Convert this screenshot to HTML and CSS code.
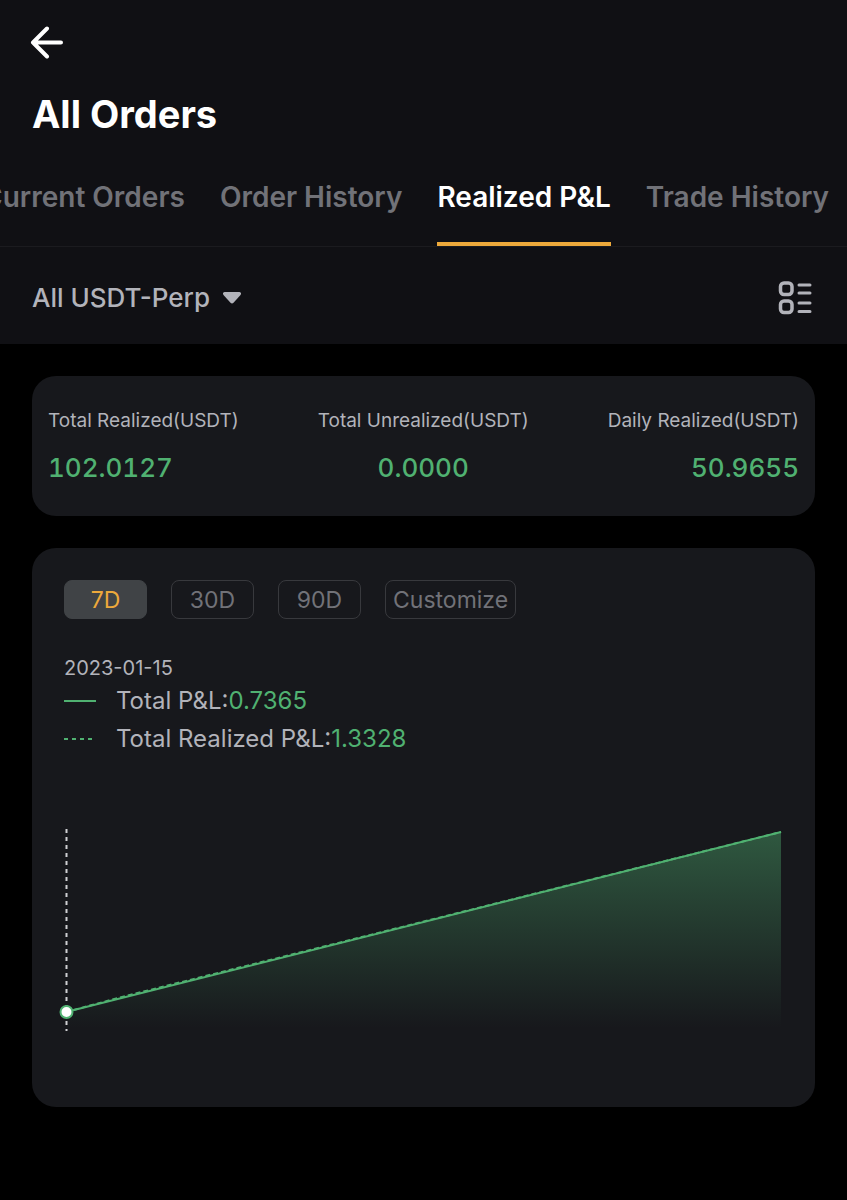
FILE: index.html
```html
<!DOCTYPE html>
<html lang="en">
<head>
<meta charset="utf-8">
<meta name="viewport" content="width=device-width, initial-scale=1">
<title>All Orders</title>
<link rel="stylesheet" href="styles.css">
</head>
<body>
    <header class="head">
        <button type="button" class="back" aria-label="Back">
            <svg width="34" height="34" viewBox="0 0 34 34"><path d="M17 3.500L3 17.500L17 31.500M3 17.500H31" fill="none" stroke="#fff" stroke-width="4" stroke-linecap="round" stroke-linejoin="round"/></svg>
        </button>
        <h1>All Orders</h1>
        <nav class="tabs">
            <a href="#current">Current Orders</a>
            <a href="#history">Order History</a>
            <a href="#realized" class="on" aria-current="page">Realized P&amp;L</a>
            <a href="#trades">Trade History</a>
        </nav>
        <div class="filter">
            <label class="pair">
                <select aria-label="Contract"><option>All USDT-Perp</option></select>
                <svg width="20" height="14" viewBox="0 0 20 14"><path d="M2.500 1H17.500Q20 1.500 18.500 4L11.500 11.800Q10 13.200 8.500 11.800L1.500 4Q0 1.500 2.500 1Z" fill="#b2b3ba"/></svg>
            </label>
            <button type="button" class="list" aria-label="List view">
                <svg width="36" height="36" viewBox="0 0 36 36" fill="none" stroke="#b2b3ba" stroke-width="3.500" stroke-linecap="round">
                    <rect x="2.500" y="3" width="11.500" height="11.500" rx="3.500"/>
                    <rect x="2.500" y="21" width="11.500" height="11.500" rx="3.500"/>
                    <path d="M21 5H32M21 13H32M21 23H32M21 31.500H32" stroke-width="3"/>
                </svg>
            </button>
        </div>
    </header>

    <main>
        <section class="card totals">
            <dl><dt>Total Realized(USDT)</dt><dd>102.0127</dd></dl>
            <dl><dt>Total Unrealized(USDT)</dt><dd>0.0000</dd></dl>
            <dl><dt>Daily Realized(USDT)</dt><dd>50.9655</dd></dl>
        </section>

        <section class="card report">
            <div class="range">
                <button type="button" class="on">7D</button>
                <button type="button">30D</button>
                <button type="button">90D</button>
                <button type="button">Customize</button>
            </div>
            <p class="date">2023-01-15</p>
            <ul class="legend">
                <li><svg width="32" height="2"><path d="M0 1H32" stroke="#50b171" stroke-width="2"/></svg><span>Total P&amp;L:<b>0.7365</b></span></li>
                <li><svg width="32" height="2"><path d="M0 1H29" stroke="#50b171" stroke-width="2" stroke-dasharray="4"/></svg><span>Total Realized P&amp;L:<b>1.3328</b></span></li>
            </ul>
            <svg class="chart" viewBox="0 0 719 204" role="img" aria-label="Total P&amp;L, last 7 days">
                <defs>
                    <linearGradient id="fade" x1="0" y1="0" x2="0" y2="1">
                        <stop offset="0" stop-color="#50b171" stop-opacity=".42"/>
                        <stop offset="1" stop-color="#50b171" stop-opacity="0"/>
                    </linearGradient>
                </defs>
                <path d="M2 184L717 4V200H2Z" fill="url(#fade)"/>
                <path d="M2.500 1V203" stroke="#d0d0d3" stroke-width="2" stroke-dasharray="4"/>
                <path d="M2 184L60 168.400L130 150.900L300 108.500L717 4" fill="none" stroke="#50b171" stroke-width="2" stroke-dasharray="5 3"/>
                <path d="M2 184L717 4" stroke="#50b171" stroke-width="2"/>
                <circle cx="2.500" cy="184" r="6" fill="#fff" stroke="#50b171" stroke-width="2"/>
            </svg>
        </section>
    </main>
</body>
</html>
```
FILE: styles.css
```css
* { box-sizing:border-box; }
body,h1,p,ul,dl,dd { margin:0; padding:0; }
body { background:#000; color:#b2b3ba; font-family:Inter,"Liberation Sans",sans-serif; }
button,select { margin:0; padding:0; border:0; background:none; color:inherit; font:inherit; cursor:pointer; }
a { color:inherit; text-decoration:none; }
svg { display:block; flex:none; }

.head { background:#101014; }
.back { display:block; margin-left:30px; padding-top:25px; }
h1 { padding:27px 32px 0; color:#fff; font-size:38px; line-height:56px; font-weight:700; }

.tabs { display:flex; justify-content:flex-end; gap:35px; margin-top:20px; padding-right:18px; overflow:hidden; border-bottom:1px solid #1b1b1f; }
.tabs a { flex:none; height:84px; color:#717278; font-size:28px; line-height:70px; font-weight:600; white-space:nowrap; }
.tabs .on { color:#fff; border-bottom:4px solid #eda93b; }

.filter { display:flex; justify-content:space-between; align-items:center; height:97px; padding:5px 33px 0 32px; }
.pair { display:flex; align-items:center; gap:11px; font-size:26px; font-weight:500; }
.pair select { appearance:none; line-height:36px; }

main { padding:32px; }
.card { background:#17181c; border-radius:24px; }
.totals { display:flex; justify-content:space-between; height:140px; padding:28px 16px; }
.totals dl { text-align:center; }
.totals dl:first-child { text-align:left; }
.totals dl:last-child { text-align:right; }
.totals dt { font-size:19px; line-height:34px; }
.totals dd { margin-top:12px; color:#50b171; font-size:26px; line-height:36px; font-weight:500; font-variant-numeric:tabular-nums; }

.report { margin-top:32px; padding:32px 32px 75px; }
.range { display:flex; gap:24px; }
.range button { min-width:83px; height:39px; padding:0 7px; border:1px solid #38393d; border-radius:8px; color:#717278; font-size:23px; }
.range .on { border-color:#404346; background:#404346; color:#eda93b; }
.date { margin-top:35px; font-size:20px; line-height:28px; }
.legend { list-style:none; }
.legend li { display:flex; align-items:center; gap:20px; font-size:24px; line-height:38px; }
.legend b { color:#50b171; font-weight:400; }
.chart { width:100%; margin-top:70px; overflow:visible; }
```
